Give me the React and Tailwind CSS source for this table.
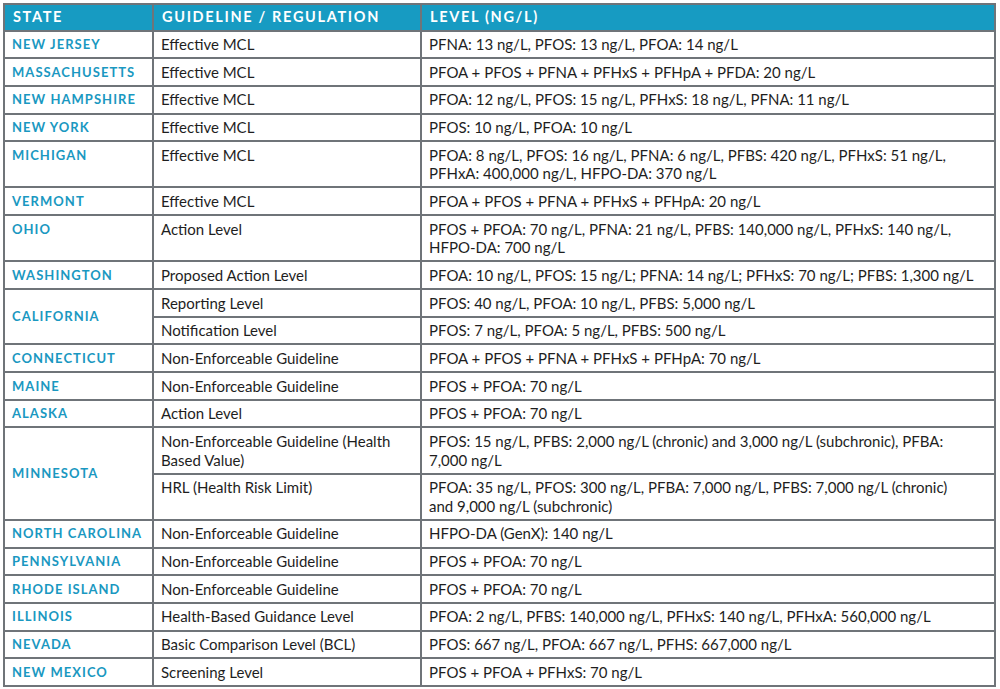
const rows = [
  { state: "NEW JERSEY", items: [["Effective MCL", "PFNA: 13 ng/L, PFOS: 13 ng/L, PFOA: 14 ng/L"]] },
  { state: "MASSACHUSETTS", items: [["Effective MCL", "PFOA + PFOS + PFNA + PFHxS + PFHpA + PFDA: 20 ng/L"]] },
  { state: "NEW HAMPSHIRE", items: [["Effective MCL", "PFOA: 12 ng/L, PFOS: 15 ng/L, PFHxS: 18 ng/L, PFNA: 11 ng/L"]] },
  { state: "NEW YORK", items: [["Effective MCL", "PFOS: 10 ng/L, PFOA: 10 ng/L"]] },
  {
    state: "MICHIGAN",
    items: [["Effective MCL", ["PFOA: 8 ng/L, PFOS: 16 ng/L, PFNA: 6 ng/L, PFBS: 420 ng/L, PFHxS: 51 ng/L,", "PFHxA: 400,000 ng/L, HFPO-DA: 370 ng/L"]]],
  },
  { state: "VERMONT", items: [["Effective MCL", "PFOA + PFOS + PFNA + PFHxS + PFHpA: 20 ng/L"]] },
  {
    state: "OHIO",
    items: [["Action Level", ["PFOS + PFOA: 70 ng/L, PFNA: 21 ng/L, PFBS: 140,000 ng/L, PFHxS: 140 ng/L,", "HFPO-DA: 700 ng/L"]]],
  },
  { state: "WASHINGTON", items: [["Proposed Action Level", "PFOA: 10 ng/L, PFOS: 15 ng/L; PFNA: 14 ng/L; PFHxS: 70 ng/L; PFBS: 1,300 ng/L"]] },
  {
    state: "CALIFORNIA",
    items: [
      ["Reporting Level", "PFOS: 40 ng/L, PFOA: 10 ng/L, PFBS: 5,000 ng/L"],
      ["Notification Level", "PFOS: 7 ng/L, PFOA: 5 ng/L, PFBS: 500 ng/L"],
    ],
  },
  { state: "CONNECTICUT", items: [["Non-Enforceable Guideline", "PFOA + PFOS + PFNA + PFHxS + PFHpA: 70 ng/L"]] },
  { state: "MAINE", items: [["Non-Enforceable Guideline", "PFOS + PFOA: 70 ng/L"]] },
  { state: "ALASKA", items: [["Action Level", "PFOS + PFOA: 70 ng/L"]] },
  {
    state: "MINNESOTA",
    items: [
      [
        ["Non-Enforceable Guideline (Health", "Based Value)"],
        ["PFOS: 15 ng/L, PFBS: 2,000 ng/L (chronic) and 3,000 ng/L (subchronic), PFBA:", "7,000 ng/L"],
      ],
      ["HRL (Health Risk Limit)", ["PFOA: 35 ng/L, PFOS: 300 ng/L, PFBA: 7,000 ng/L, PFBS: 7,000 ng/L (chronic)", "and 9,000 ng/L (subchronic)"]],
    ],
  },
  { state: "NORTH CAROLINA", items: [["Non-Enforceable Guideline", "HFPO-DA (GenX): 140 ng/L"]] },
  { state: "PENNSYLVANIA", items: [["Non-Enforceable Guideline", "PFOS + PFOA: 70 ng/L"]] },
  { state: "RHODE ISLAND", items: [["Non-Enforceable Guideline", "PFOS + PFOA: 70 ng/L"]] },
  { state: "ILLINOIS", items: [["Health-Based Guidance Level", "PFOA: 2 ng/L, PFBS: 140,000 ng/L, PFHxS: 140 ng/L, PFHxA: 560,000 ng/L"]] },
  { state: "NEVADA", items: [["Basic Comparison Level (BCL)", "PFOS: 667 ng/L, PFOA: 667 ng/L, PFHS: 667,000 ng/L"]] },
  { state: "NEW MEXICO", items: [["Screening Level", "PFOS + PFOA + PFHxS: 70 ng/L"]] },
];

// lines given as array keep the reference's line breaks
const Lines = ({ text }) =>
  Array.isArray(text)
    ? text.map((line, i) => (
        <span key={i} className="block whitespace-nowrap">
          {line}
        </span>
      ))
    : text;

const cell = "border-2 border-[#6f7479] px-[7px] py-[3.6px] leading-[18.5px] align-top";
const stateCell =
  "border-2 border-[#6f7479] px-[7px] py-[3.6px] leading-[18.5px] whitespace-nowrap text-[13px] font-bold tracking-[0.08em] text-[#1a98c1]";
const headCell =
  "border-2 border-[#6f7479] px-[8px] py-[3px] leading-[18.5px] text-left text-[14.5px] font-bold tracking-[0.115em]";

export default function App() {
  return (
    <div className="w-[1000px] h-[689px] bg-white pt-[3px] pl-[3px]" style={{ fontFamily: "Lato, 'Open Sans', sans-serif" }}>
      <table className="w-[993px] border-collapse table-fixed text-[15px] text-[#1e1e1e]">
        <colgroup>
          <col className="w-[149px]" />
          <col className="w-[268px]" />
          <col />
        </colgroup>
        <thead>
          <tr className="bg-[#179bc2] text-white">
            <th className={headCell}>STATE</th>
            <th className={headCell}>GUIDELINE / REGULATION</th>
            <th className={headCell}>LEVEL (NG/L)</th>
          </tr>
        </thead>
        <tbody>
          {rows.map((row) =>
            row.items.map((item, i) => (
              <tr key={row.state + i}>
                {i === 0 && (
                  <td
                    rowSpan={row.items.length}
                    className={row.items.length > 1 ? stateCell + " align-middle" : stateCell + " align-top"}
                  >
                    {row.state}
                  </td>
                )}
                <td className={cell}>
                  <Lines text={item[0]} />
                </td>
                <td className={cell}>
                  <Lines text={item[1]} />
                </td>
              </tr>
            ))
          )}
        </tbody>
      </table>
    </div>
  );
}
